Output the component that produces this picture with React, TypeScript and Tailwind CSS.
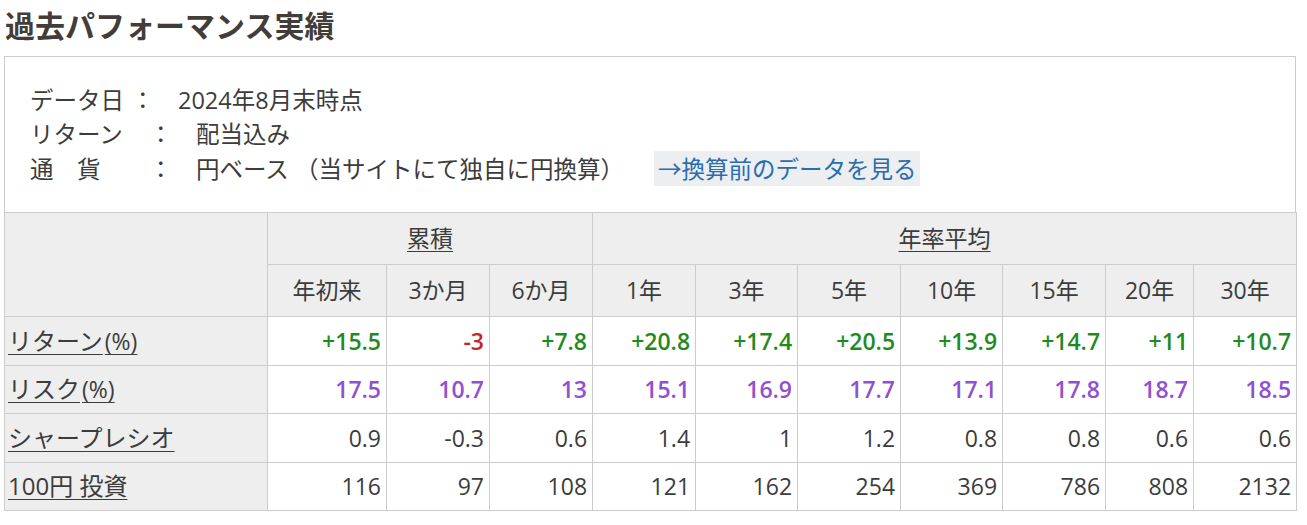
import React from "react";

const font = { fontFamily: '"Open Sans", "Noto Sans CJK JP", sans-serif' };

type Row = {
  label: string;
  unit?: string;
  values: string[];
  kind: "return" | "risk" | "plain";
};

const rows: Row[] = [
  {
    label: "リターン",
    unit: "(%)",
    kind: "return",
    values: ["+15.5", "-3", "+7.8", "+20.8", "+17.4", "+20.5", "+13.9", "+14.7", "+11", "+10.7"],
  },
  {
    label: "リスク",
    unit: "(%)",
    kind: "risk",
    values: ["17.5", "10.7", "13", "15.1", "16.9", "17.7", "17.1", "17.8", "18.7", "18.5"],
  },
  {
    label: "シャープレシオ",
    kind: "plain",
    values: ["0.9", "-0.3", "0.6", "1.4", "1", "1.2", "0.8", "0.8", "0.6", "0.6"],
  },
  {
    label: "100円 投資",
    kind: "plain",
    values: ["116", "97", "108", "121", "162", "254", "369", "786", "808", "2132"],
  },
];

const periods = ["年初来", "3か月", "6か月", "1年", "3年", "5年", "10年", "15年", "20年", "30年"];

const valueColor = (row: Row, v: string) => {
  if (row.kind === "risk") return "text-[#9150d2] font-semibold";
  if (row.kind === "return") {
    return v.startsWith("-") ? "text-[#c3282a] font-semibold" : "text-[#1f8b1f] font-semibold";
  }
  return "text-[#3c3c3c]";
};

export default function App() {
  return (
    <div className="min-h-[525px] bg-white text-[#3c3c3c]" style={font}>
      <h1 className="pl-[5px] pt-[6px] text-[30px] font-bold leading-[40px] text-[#423d39]">
        過去パフォーマンス実績
      </h1>

      <div className="ml-[4px] mt-[10px] w-[1292px]">
        <div className="border-x border-t border-[#cccccc] px-[25px] py-[26px] text-[23.5px] leading-[34px]">
          <div className="flex items-center">
            <span className="w-[101px]">データ日</span>
            <span className="w-[47px]">：</span>
            <span>2024年8月末時点</span>
          </div>
          <div className="flex items-center">
            <span className="w-[119px]">リターン</span>
            <span className="w-[47px]">：</span>
            <span>配当込み</span>
          </div>
          <div className="flex items-center">
            <span className="w-[119px]">通　貨</span>
            <span className="w-[47px]">：</span>
            <span>円ベース （当サイトにて独自に円換算）</span>
            <a
              href="#"
              className="ml-[30px] bg-[#eceeef] px-[4px] leading-[35px] text-[#2a6cb0]"
              style={{ fontFamily: '"Noto Sans CJK JP", sans-serif' }}
            >
              →換算前のデータを見る
            </a>
          </div>
        </div>

        <table className="w-[1292px] table-fixed border-collapse text-[23px]">
          <colgroup>
            <col className="w-[263px]" />
            <col className="w-[119px]" />
            <col className="w-[103px]" />
            <col className="w-[103px]" />
            <col className="w-[103px]" />
            <col className="w-[102px]" />
            <col className="w-[103px]" />
            <col className="w-[102px]" />
            <col className="w-[103px]" />
            <col className="w-[88px]" />
            <col className="w-[103px]" />
          </colgroup>
          <thead>
            <tr className="h-[52px] bg-[#eeeeee]">
              <th rowSpan={2} className="border border-[#cccccc]"></th>
              <th colSpan={3} className="border border-[#cccccc] font-normal">
                <span className="underline decoration-1 underline-offset-4">累積</span>
              </th>
              <th colSpan={7} className="border border-[#cccccc] font-normal">
                <span className="underline decoration-1 underline-offset-4">年率平均</span>
              </th>
            </tr>
            <tr className="h-[52px] bg-[#eeeeee]">
              {periods.map((p) => (
                <th key={p} className="border border-[#cccccc] font-normal">
                  {p}
                </th>
              ))}
            </tr>
          </thead>
          <tbody>
            {rows.map((row) => (
              <tr key={row.label} className="h-[48.5px]">
                <td className="border border-[#cccccc] bg-[#eeeeee] px-[3px] text-left text-[24px]">
                  <a href="#" className="underline decoration-1 underline-offset-4">
                    {row.label}
                    {row.unit && <span className="ml-[2px] text-[23px]">{row.unit}</span>}
                  </a>
                </td>
                {row.values.map((v, i) => (
                  <td
                    key={i}
                    className={`border border-[#cccccc] px-[5px] text-right ${valueColor(row, v)}`}
                  >
                    {v}
                  </td>
                ))}
              </tr>
            ))}
          </tbody>
        </table>
      </div>
    </div>
  );
}
